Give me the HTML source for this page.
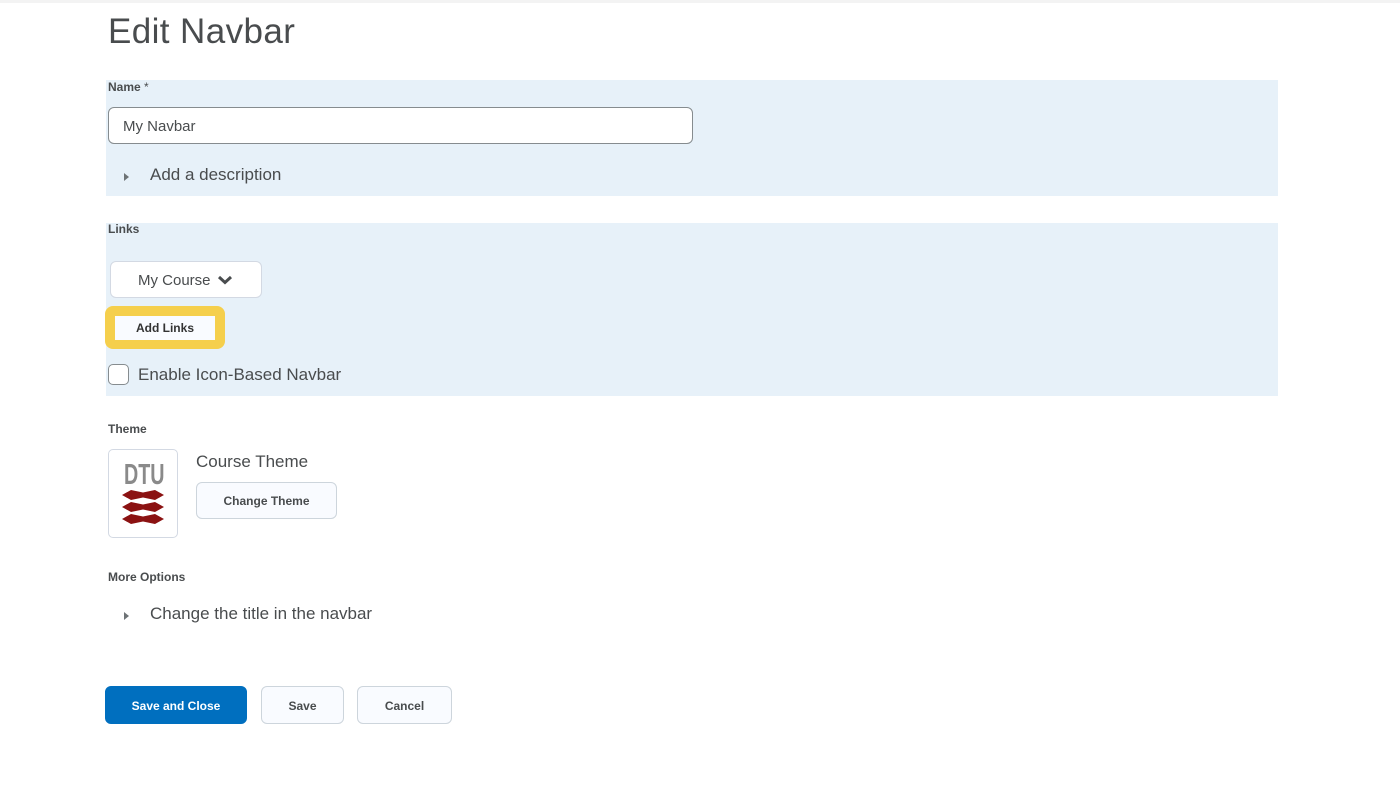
<!DOCTYPE html>
<html><head><meta charset="utf-8"><style>
*{box-sizing:border-box;margin:0;padding:0}
body{width:1400px;height:788px;background:#fff;font-family:"Liberation Sans",sans-serif;color:#494c4e;position:relative;overflow:hidden}
.a{position:absolute}
.top{left:0;top:0;width:1400px;height:3px;background:#f3f3f3}
h1{position:absolute;left:108px;top:12px;font-size:35px;font-weight:400;color:#494c4e;letter-spacing:0.4px}
.panel{background:#e7f1f9;left:106px;width:1172px}
.lbl{font-size:12px;font-weight:bold;color:#494c4e}
.btn{position:absolute;border:1px solid #cdd5dc;border-radius:6px;background:#f9fbff;font-size:12px;font-weight:bold;color:#494c4e;text-align:center}
.tri{width:0;height:0;border-left:5px solid #6e7376;border-top:4px solid transparent;border-bottom:4px solid transparent}
.txt{font-size:17px;color:#494c4e}
</style></head><body>
<div class="a top"></div>
<h1>Edit Navbar</h1>
<div class="a panel" style="top:80px;height:116px"></div>
<div class="a lbl" style="left:108px;top:80px">Name <span style="font-weight:normal">*</span></div>
<div class="a" style="left:108px;top:107px;width:585px;height:37px;border:1px solid #868c8f;border-radius:6px;background:#fff;font-size:15px;padding:10px 0 0 14px;color:#494c4e">My Navbar</div>
<div class="a tri" style="left:124px;top:173px"></div>
<div class="a txt" style="left:150px;top:165px">Add a description</div>

<div class="a panel" style="top:223px;height:173px"></div>
<div class="a lbl" style="left:108px;top:222px">Links</div>
<div class="a" style="left:110px;top:261px;width:152px;height:37px;border:1px solid #d3d9e3;border-radius:6px;background:#fff;font-size:15px;padding:10px 0 0 27px;color:#494c4e">My Course <svg width="16" height="10" viewBox="0 0 16 10" style="margin-left:2px"><path d="M2 2l6 5.5 6-5.5" stroke="#494c4e" stroke-width="3" fill="none"/></svg></div>
<div class="a" style="left:105px;top:306px;width:120px;height:43px;background:#f5cf4c;border-radius:8px"></div>
<div class="a" style="left:115px;top:316px;width:100px;height:24px;background:#f9fbff;font-size:12px;font-weight:bold;text-align:center;padding-top:5px;color:#333">Add Links</div>
<div class="a" style="left:108px;top:364px;width:21px;height:21px;border:1px solid #868c8f;border-radius:5px;background:#fff"></div>
<div class="a txt" style="left:138px;top:365px">Enable Icon-Based Navbar</div>

<div class="a lbl" style="left:108px;top:422px">Theme</div>
<div class="a" style="left:108px;top:449px;width:70px;height:89px;border:1px solid #d3d9e3;border-radius:5px;background:#fff">
<div class="a" style="left:15px;top:9px;font-size:29px;font-weight:bold;color:#8a8a8a;transform:scaleX(0.68);transform-origin:left;letter-spacing:0px">DTU</div>
<svg class="a" style="left:13px;top:40px" width="42" height="34" viewBox="0 0 42 34"><g fill="#8b1212"><path d="M0 5L9 0 21 2.5 33 0 42 5 33 10 21 7.5 9 10Z"/><path d="M0 17L9 12 21 14.5 33 12 42 17 33 22 21 19.5 9 22Z"/><path d="M0 29L9 24 21 26.5 33 24 42 29 33 34 21 31.5 9 34Z"/></g></svg>
</div>
<div class="a txt" style="left:196px;top:452px">Course Theme</div>
<div class="btn" style="left:196px;top:482px;width:141px;height:37px;padding-top:11px">Change Theme</div>

<div class="a lbl" style="left:108px;top:570px">More Options</div>
<div class="a tri" style="left:124px;top:612px"></div>
<div class="a txt" style="left:150px;top:604px">Change the title in the navbar</div>

<div class="btn" style="left:105px;top:686px;width:142px;height:38px;background:#006fbf;border-color:#006fbf;color:#fff;padding-top:12px">Save and Close</div>
<div class="btn" style="left:261px;top:686px;width:83px;height:38px;padding-top:12px">Save</div>
<div class="btn" style="left:357px;top:686px;width:95px;height:38px;padding-top:12px">Cancel</div>
</body></html>
